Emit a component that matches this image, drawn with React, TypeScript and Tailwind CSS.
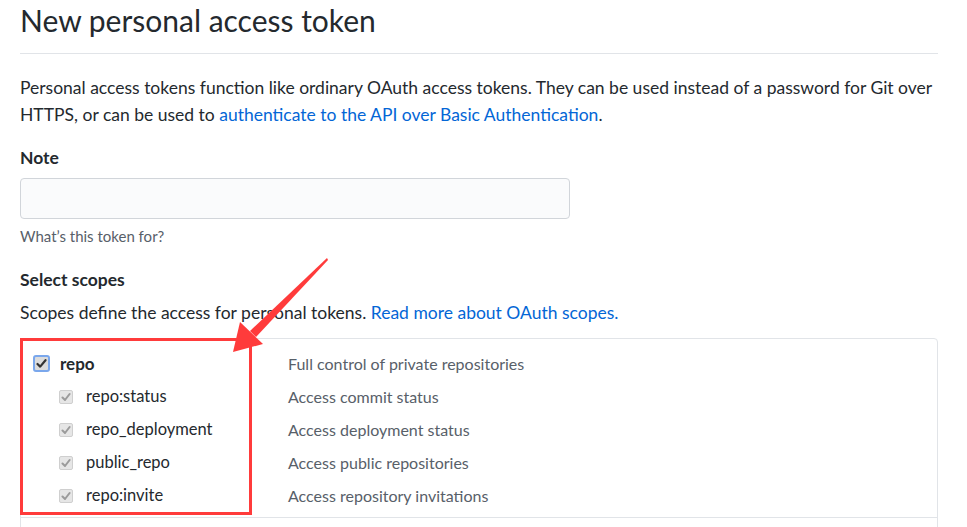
import React from "react";

function MainCheck() {
  return (
    <span className="inline-flex w-[17px] h-[17px] items-center justify-center rounded-[3px] border-2 border-[#7aa7ec] bg-[#dcdcdc]">
      <svg width="11" height="11" viewBox="0 0 11 11">
        <path d="M1.5 6 L4.2 8.6 L9.5 2.2" fill="none" stroke="#333" strokeWidth="2.2" strokeLinecap="round" strokeLinejoin="round" />
      </svg>
    </span>
  );
}

function SubCheck() {
  return (
    <span className="inline-flex w-[14px] h-[14px] items-center justify-center rounded-[2px] border border-[#cfcfcf] bg-[#e6e6e6]">
      <svg width="10" height="10" viewBox="0 0 10 10">
        <path d="M1.5 5.5 L4 8 L8.6 2" fill="none" stroke="#9b9b9b" strokeWidth="2" strokeLinecap="round" strokeLinejoin="round" />
      </svg>
    </span>
  );
}

const subs = [
  ["repo:status", "Access commit status"],
  ["repo_deployment", "Access deployment status"],
  ["public_repo", "Access public repositories"],
  ["repo:invite", "Access repository invitations"],
];

export default function App() {
  return (
    <div className="relative w-[967px] h-[527px] overflow-hidden bg-white text-[#24292e] font-['Lato','Noto_Sans',sans-serif]">
      <div className="ml-[20px] w-[918px]">
        <div className="h-[54px] border-b border-[#e1e4e8]">
          <h2 className="text-[30px] leading-[40px] font-normal">New personal access token</h2>
        </div>
        <p className="mt-[20px] text-[17.5px] leading-[27px]">
          Personal access tokens function like ordinary OAuth access tokens. They can be used instead of a password for Git over HTTPS, or can be used to{" "}
          <a className="text-[#0366d6]">authenticate to the API over Basic Authentication</a>.
        </p>
        <div className="mt-[16px] h-[27px] leading-[27px] text-[17.5px] font-bold">Note</div>
        <div className="mt-[7px] w-[550px] h-[41px] rounded-[4px] border border-[#d1d5da] bg-[#fafbfc]" />
        <div className="mt-[7px] h-[20px] leading-[20px] text-[15px] text-[#586069]">What’s this token for?</div>
        <div className="mt-[20px] h-[27px] leading-[27px] text-[17.5px] font-bold">Select scopes</div>
        <div className="mt-[6px] h-[27px] leading-[27px] text-[17.5px]">
          Scopes define the access for personal tokens. <a className="text-[#0366d6]">Read more about OAuth scopes.</a>
        </div>
        <div className="mt-[12px] border border-[#e1e4e8] rounded-t-[4px]">
          <div className="pt-[8px] pb-[5px] border-b border-[#e1e4e8]">
            <div className="flex h-[33px] items-center">
              <div className="w-[267px] flex items-center pl-[12px]">
                <MainCheck />
                <span className="ml-[10px] text-[17px] font-bold">repo</span>
              </div>
              <span className="text-[16px] text-[#586069]">Full control of private repositories</span>
            </div>
            {subs.map(([k, d]) => (
              <div key={k} className="flex h-[33px] items-center">
                <div className="w-[267px] flex items-center pl-[38px]">
                  <SubCheck />
                  <span className="ml-[13px] text-[16.5px]">{k}</span>
                </div>
                <span className="text-[16px] text-[#586069]">{d}</span>
              </div>
            ))}
          </div>
          <div className="h-[40px]" />
        </div>
      </div>
      <div className="absolute left-[20px] top-[338px] w-[232px] h-[177px] border-[3px] border-[#ff3b3b]" />
      <svg className="absolute left-0 top-0 pointer-events-none" width="967" height="527">
        <polygon points="327,258 328,260 256,337 250,331" fill="#ff3b3b" />
        <polygon points="233,352 240,322 263,344" fill="#ff3b3b" />
      </svg>
    </div>
  );
}
